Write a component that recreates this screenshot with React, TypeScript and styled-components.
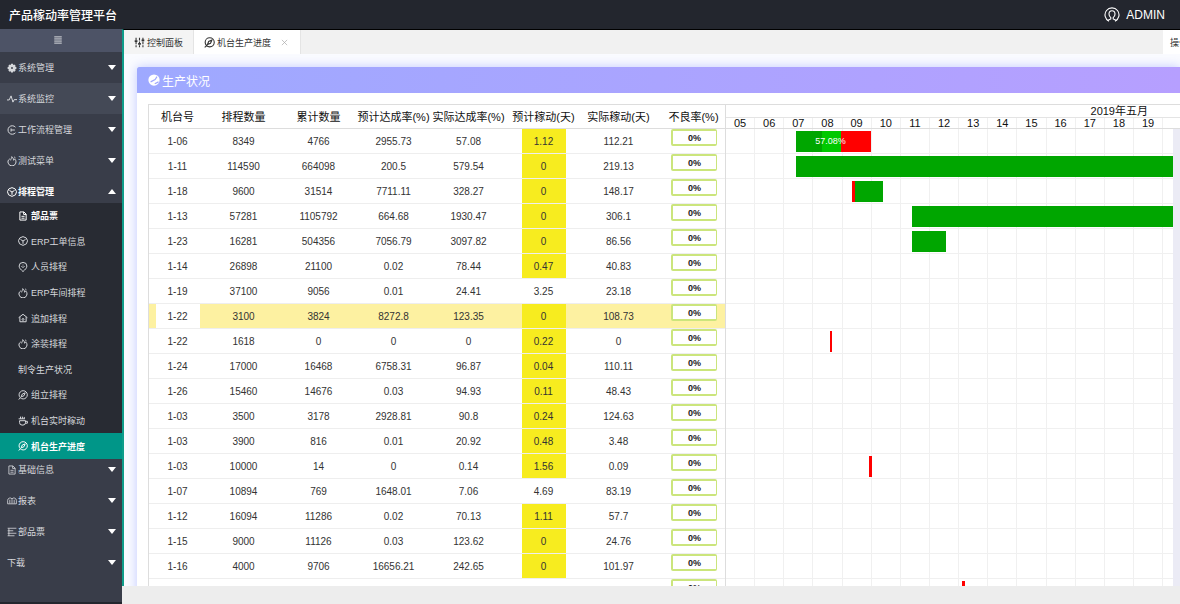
import React from "react";
import styled, { createGlobalStyle } from "styled-components";

const GlobalStyle = createGlobalStyle`
  * { box-sizing: border-box; }
  body {
    margin: 0;
    background: #ededed;
    font-family: "Liberation Sans", "Noto Sans CJK SC", sans-serif;
    font-size: 10px;
    color: #333;
  }
  button { font: inherit; color: inherit; background: none; border: 0; padding: 0; cursor: pointer; }
  a { color: inherit; text-decoration: none; }
`;

/* ---------- icons ---------- */

type IconName =
  | "gear" | "pulse" | "flow" | "flame" | "cube" | "file" | "pin" | "home"
  | "compass" | "cup" | "book" | "list" | "menu" | "sliders" | "user" | "gauge" | "close";

const shapes: Record<IconName, React.ReactNode> = {
  gear: (
    <>
      <path
        fill="currentColor"
        stroke="none"
        fillRule="evenodd"
        d="M6.500 1h3l.5 2 1.800-.8 2 2-.8 1.800 2 .5v3l-2 .5.8 1.800-2 2-1.800-.8-.5 2h-3l-.5-2-1.800.8-2-2 .8-1.800-2-.5v-3l2-.5-.8-1.800 2-2 1.800.8zM8 6.500a1.500 1.500 0 1 0 0 3 1.500 1.500 0 0 0 0-3z"
      />
    </>
  ),
  pulse: <path d="M0 9.500h3.500L6.500 3l3 10 2-4H16" />,
  flow: <path d="M13.500 3.500A6.800 6.800 0 1 0 13.500 12.500M6.500 5.500v5M6.500 8h6" />,
  flame: <path d="M4.500 4.500C1.500 6.500 1 9 2 11.500a6.300 6.300 0 0 0 12 0c1-3 0-5.500-2-7-.2 1.500-.8 2-1.500 2.200C10.300 4.500 9.500 2.500 7.500 1 7.800 3.500 6 4.500 5.800 7M11.500 1.500l2 1.500" />,
  cube: (
    <>
      <path d="M8 1l5 2 2.300 4.500L13.500 12.500 8 15l-5.500-2.500L.7 7.500 3 3z" />
      <path d="M4 5.500L8 8l4-2.500M8 8v4.500" />
    </>
  ),
  file: <path d="M3 1.500h6.500L13 5v9.500H3zM9 1.500V5.500h4M5.500 8.500h5M5.500 11.500h5" />,
  pin: (
    <>
      <path d="M8 15.300C4.500 12 1.800 9.800 1.800 6.500a6.200 5.800 0 0 1 12.400 0C14.200 9.800 11.500 12 8 15.300z" />
      <path d="M5.500 6.500L8 9l2.500-2.500M8 4.200v1.300" />
    </>
  ),
  home: <path d="M1 7.500L8 2l7 5.500M3 6.500V14h10V6.500M6 10.500l2-2 2 2M8 9v4" />,
  compass: (
    <>
      <circle cx="8.300" cy="7.700" r="6.600" />
      <path d="M11.500 4.500L6.800 6.500 5 11l4.500-1.800z" />
      <path d="M1 15l3-2.500" />
    </>
  ),
  cup: <path d="M2.500 7.500h9.500v3A4 4 0 0 1 8 14.500H6.500a4 4 0 0 1-4-4zM12 8.500h3v3h-3.500M4 1v3.500M7 1v3.500M10 1.500v3M1 4.500h10" />,
  book: <path d="M1 12.500V7A4 4 0 0 1 8 4.500 4 4 0 0 1 15 7v5.500H1zM8 5v7M4.500 6v6M11.500 6v6" />,
  list: <path d="M1 2h14M1 6h9M1 10h14M1 14h11M3 2v12" />,
  menu: <path d="M2 3h12M2 6.300h12M2 9.700h12M2 13h12" />,
  sliders: (
    <>
      <path d="M3 1v14M8 1v14M13 1v14" strokeDasharray="4 1.500" />
      <path d="M1 6h4M6 10h4M11 5h4" strokeWidth="2.500" />
    </>
  ),
  user: (
    <>
      <path d="M5 14.200A7 7 0 1 1 11 14.200" />
      <path d="M3.500 13.600L6.800 12V10.600A4 4.200 0 0 1 5 7a3 3.300 0 0 1 6 0 4 4.200 0 0 1-1.800 3.600V12l3.300 1.600" />
    </>
  ),
  gauge: (
    <>
      <circle cx="8" cy="8" r="7.500" fill="currentColor" stroke="none" />
      <path d="M3.500 10.500L9.500 7.500 12 3.500M9 13l5-2.500" stroke="#9fa6fd" strokeWidth="1.500" />
    </>
  ),
  close: <path d="M2 2l12 12M14 2L2 14" />,
};

const IconSvg = styled.svg`
  flex: none;
  display: block;
  fill: none;
  stroke: currentColor;
`;

function Icon({ name, size = 10, weight = 1.6 }: { name: IconName; size?: number; weight?: number }) {
  return (
    <IconSvg viewBox="0 0 16 16" width={size} height={size} strokeWidth={weight} aria-hidden="true">
      {shapes[name]}
    </IconSvg>
  );
}

/* ---------- frame ---------- */

const Page = styled.div`
  height: 100vh;
  display: flex;
  flex-direction: column;
  overflow: hidden;
`;

const TopBar = styled.header`
  flex: none;
  height: 29px;
  padding: 0 15px 0 9px;
  display: flex;
  align-items: center;
  justify-content: space-between;
  background: #23262e;
  color: #fff;
  font-size: 12px;
`;

const Brand = styled.h1`
  margin: 0;
  font-size: 12px;
  font-weight: 500;
`;

const UserButton = styled.button`
  display: flex;
  align-items: center;
  gap: 6px;
`;

const Body = styled.div`
  flex: 1;
  min-height: 0;
  display: flex;
`;

/* ---------- sidebar ---------- */

const Sidebar = styled.nav`
  flex: none;
  width: 122px;
  background: #393d49;
  border-bottom: 2px solid #23262e;
  color: #d6d8dc;
  font-size: 9px;
`;

const Collapse = styled.button`
  width: 100%;
  height: 23px;
  display: flex;
  align-items: center;
  justify-content: center;
  padding: 0 6px 2px 0;
  background: #4d5366;
`;

const MenuItem = styled.button<{ $hover?: boolean; $open?: boolean }>`
  width: 100%;
  height: 31px;
  padding: 0 6px 0 7px;
  display: flex;
  align-items: center;
  gap: 1px;
  background: ${(p) => (p.$hover ? "#444956" : "transparent")};
  color: ${(p) => (p.$open ? "#fff" : "inherit")};
  font-weight: ${(p) => (p.$open ? 700 : 400)};
`;

const Caret = styled.span<{ $up?: boolean }>`
  margin-left: auto;
  border: 4px solid transparent;
  border-top: ${(p) => (p.$up ? "0" : "5px solid #fff")};
  border-bottom: ${(p) => (p.$up ? "5px solid #fff" : "0")};
`;

const SubMenu = styled.ul`
  position: relative;
  margin: -4px 0 -5px;
  padding: 0;
  height: 256px;
  list-style: none;
  display: grid;
  grid-auto-rows: 1fr;
  background: #282b33;
`;

const SubLink = styled.a<{ $active?: boolean; $strong?: boolean }>`
  height: 100%;
  padding-left: 18px;
  display: flex;
  align-items: center;
  gap: 3px;
  background: ${(p) => (p.$active ? "#009688" : "transparent")};
  color: ${(p) => (p.$active || p.$strong ? "#fff" : "inherit")};
  font-weight: ${(p) => (p.$active || p.$strong ? 700 : 400)};
`;

/* ---------- main area ---------- */

const Main = styled.main`
  flex: 1;
  min-width: 0;
  display: flex;
  flex-direction: column;
`;

const Workspace = styled.div`
  flex: 1;
  min-height: 0;
  display: flex;
  flex-direction: column;
  border-top: 1px solid #000;
  border-left: 2px solid #0f9d8a;
`;

const TabBar = styled.div`
  flex: none;
  height: 24px;
  display: flex;
  background: #f1f1f1;
  color: #333;
  font-size: 9px;
`;

const Tab = styled.button<{ $active?: boolean }>`
  padding: 0 ${(p) => (p.$active ? "12px" : "10px")} 0 10px;
  display: flex;
  align-items: center;
  gap: 2px;
  border-right: 1px solid #e4e4e4;
  background: ${(p) => (p.$active ? "#fff" : "#f4f4f4")};
`;

const TabClose = styled.span`
  margin-left: 8px;
  color: #aaa;
`;

const TabActions = styled.button`
  width: 17px;
  margin-left: auto;
  padding-left: 7px;
  overflow: hidden;
  white-space: nowrap;
  text-align: left;
  background: #fff;
`;

const Content = styled.div`
  flex: 1;
  min-height: 0;
  padding: 13px 0 0 13px;
  background: #fafbff;
  overflow: hidden;
`;

const Card = styled.section`
  background: #fff;
  box-shadow: 0 0 10px rgba(110, 130, 255, 0.4);
`;

const CardTitle = styled.h2`
  margin: 0;
  height: 26px;
  padding-left: 11px;
  display: flex;
  align-items: center;
  gap: 2px;
  border-radius: 2px 0 0 0;
  background: linear-gradient(90deg, #9ea9ff, #b69fff);
  color: #fff;
  font-size: 12px;
  font-weight: 400;
`;

const CardBody = styled.div`
  padding: 11px 0 0 11px;
`;

const Board = styled.div`
  display: flex;
  border-top: 1px solid #ddd;
  border-left: 1px solid #ddd;
`;

const Footer = styled.footer`
  flex: none;
  height: 18px;
  background: #ededed;
`;

/* ---------- table ---------- */

const DataTable = styled.table`
  flex: none;
  width: 577px;
  table-layout: fixed;
  border-collapse: separate;
  border-spacing: 0;
  border-right: 1px solid #ddd;
  text-align: center;
`;

const HeadCell = styled.th`
  height: 24px;
  padding: 0;
  border-bottom: 1px solid #ddd;
  color: #111;
  font-size: 11px;
  line-height: 16px;
  font-weight: 400;
  white-space: nowrap;

  &:last-child {
    padding-left: 6px;
  }
`;

const DataRow = styled.tr<{ $selected?: boolean }>`
  background: ${(p) => (p.$selected ? "#fdf1a1" : "#fff")};
`;

const Cell = styled.td`
  height: 25px;
  padding: 0;
  border-bottom: 1px solid #eee;
  vertical-align: top;
`;

const Fill = styled.span<{ $tone?: "yellow" | "white" }>`
  display: block;
  width: 44px;
  height: 24px;
  margin: 0 auto;
  padding-top: 2px;
  line-height: 22px;
  background: ${(p) => (p.$tone === "yellow" ? "#f7ec1f" : p.$tone === "white" ? "#fff" : "transparent")};
`;

const Badge = styled.span`
  display: block;
  width: 46px;
  height: 17px;
  margin-left: 15px;
  border: 2px solid #cbe57c;
  border-right-width: 1px;
  border-radius: 2px;
  background: #fff;
  color: #222;
  font-size: 9px;
  font-weight: 700;
  line-height: 14px;
`;

/* ---------- gantt ---------- */

const Gantt = styled.div`
  flex: 1;
  min-width: 0;
`;

const Month = styled.div`
  height: 13px;
  padding-right: 32px;
  border-bottom: 1px solid #e4e4e4;
  color: #111;
  font-size: 11px;
  line-height: 12px;
  text-align: right;
`;

const Days = styled.div`
  height: 11px;
  padding-right: 7px;
  display: flex;
  border-bottom: 1px solid #ddd;
  color: #111;
  font-size: 11px;
  line-height: 11px;
  text-align: center;
`;

const Day = styled.div`
  flex: 1;
  border-right: 1px solid #f0f0f0;
`;

const Rest = styled.div`
  flex: none;
  width: 10px;
`;

const Track = styled.div`
  border-right: 7px solid #ebebf5;
`;

const GanttRow = styled.div`
  height: 25px;
  display: grid;
  border-bottom: 1px solid #f0f0f0;
`;

const Lines = styled.div`
  grid-area: 1 / 1;
  display: flex;
`;

const Bars = styled.div`
  grid-area: 1 / 1;
  z-index: 1;
  display: flex;
  padding-top: 2px;
`;

const Bar = styled.div`
  height: 21px;
  display: grid;
`;

const SegmentRow = styled.div`
  grid-area: 1 / 1;
  display: flex;
`;

const Segment = styled.span`
  display: block;
`;

const BarLabel = styled.span`
  grid-area: 1 / 1;
  padding-right: 6px;
  color: #fff;
  font-size: 9px;
  line-height: 21px;
  text-align: center;
`;

/* ---------- data ---------- */

const topMenu: { icon: IconName; text: string; hover?: boolean; open?: boolean }[] = [
  { icon: "gear", text: "系统管理" },
  { icon: "pulse", text: "系统监控", hover: true },
  { icon: "flow", text: "工作流程管理" },
  { icon: "flame", text: "测试菜单" },
  { icon: "cube", text: "排程管理", open: true },
];

const subMenu: { icon?: IconName; text: string; strong?: boolean; active?: boolean }[] = [
  { icon: "file", text: "部品票", strong: true },
  { icon: "cube", text: "ERP工单信息" },
  { icon: "pin", text: "人员排程" },
  { icon: "flame", text: "ERP车间排程" },
  { icon: "home", text: "追加排程" },
  { icon: "flame", text: "涂装排程" },
  { text: "制令生产状况" },
  { icon: "compass", text: "组立排程" },
  { icon: "cup", text: "机台实时稼动" },
  { icon: "compass", text: "机台生产进度", active: true },
];

const bottomMenu: { icon?: IconName; text: string }[] = [
  { icon: "file", text: "基础信息" },
  { icon: "book", text: "报表" },
  { icon: "list", text: "部品票" },
  { text: "下载" },
];

const columns = ["机台号", "排程数量", "累计数量", "预计达成率(%)", "实际达成率(%)", "预计稼动(天)", "实际稼动(天)", "不良率(%)"];

const rows: string[][] = [
  ["1-06", "8349", "4766", "2955.73", "57.08", "1.12", "112.21"],
  ["1-11", "114590", "664098", "200.5", "579.54", "0", "219.13"],
  ["1-18", "9600", "31514", "7711.11", "328.27", "0", "148.17"],
  ["1-13", "57281", "1105792", "664.68", "1930.47", "0", "306.1"],
  ["1-23", "16281", "504356", "7056.79", "3097.82", "0", "86.56"],
  ["1-14", "26898", "21100", "0.02", "78.44", "0.47", "40.83"],
  ["1-19", "37100", "9056", "0.01", "24.41", "3.25", "23.18"],
  ["1-22", "3100", "3824", "8272.8", "123.35", "0", "108.73"],
  ["1-22", "1618", "0", "0", "0", "0.22", "0"],
  ["1-24", "17000", "16468", "6758.31", "96.87", "0.04", "110.11"],
  ["1-26", "15460", "14676", "0.03", "94.93", "0.11", "48.43"],
  ["1-03", "3500", "3178", "2928.81", "90.8", "0.24", "124.63"],
  ["1-03", "3900", "816", "0.01", "20.92", "0.48", "3.48"],
  ["1-03", "10000", "14", "0", "0.14", "1.56", "0.09"],
  ["1-07", "10894", "769", "1648.01", "7.06", "4.69", "83.19"],
  ["1-12", "16094", "11286", "0.02", "70.13", "1.11", "57.7"],
  ["1-15", "9000", "11126", "0.03", "123.62", "0", "24.76"],
  ["1-16", "4000", "9706", "16656.21", "242.65", "0", "101.97"],
  ["", "", "", "", "", "", ""],
];
const selectedRow = 7;

const days = ["05", "06", "07", "08", "09", "10", "11", "12", "13", "14", "15", "16", "17", "18", "19"];

const GREEN = "#00a600";
const LIME = "#00c800";
const RED = "#ff0000";

/* start and part lengths are percentages of the visible period */
type BarData = { start: number; parts: [number, string][]; label?: string };
const bars: Record<number, BarData> = {
  0: { start: 15.6, parts: [[5.9, GREEN], [4.3, LIME], [6.7, RED]], label: "57.08%" },
  1: { start: 15.6, parts: [[84.4, GREEN]] },
  2: { start: 28.2, parts: [[0.7, RED], [6.2, GREEN]] },
  3: { start: 41.5, parts: [[58.5, GREEN]] },
  4: { start: 41.5, parts: [[7.7, GREEN]] },
  8: { start: 23.3, parts: [[0.5, RED]] },
  13: { start: 32.1, parts: [[0.5, RED]] },
  18: { start: 52.9, parts: [[0.5, RED]] },
};

function ProgressBar({ data }: { data: BarData }) {
  const total = data.parts.reduce((sum, [len]) => sum + len, 0);
  return (
    <Bar style={{ marginLeft: `${data.start}%`, width: `${total}%` }}>
      <SegmentRow>
        {data.parts.map(([len, color], i) => (
          <Segment key={i} style={{ width: `${(len / total) * 100}%`, background: color }} />
        ))}
      </SegmentRow>
      {data.label && <BarLabel>{data.label}</BarLabel>}
    </Bar>
  );
}

function fillTone(column: number, row: number, value: string) {
  if (column === 5 && value !== "" && Number(value) < 2) return "yellow" as const;
  if (column === 0 && row === selectedRow) return "white" as const;
  return undefined;
}

export default function App() {
  return (
    <Page>
      <GlobalStyle />
      <TopBar>
        <Brand>产品稼动率管理平台</Brand>
        <UserButton type="button">
          <Icon name="user" size={16} weight={1.1} />
          ADMIN
        </UserButton>
      </TopBar>
      <Body>
        <Sidebar>
          <Collapse type="button" aria-label="菜单">
            <Icon name="menu" />
          </Collapse>
          {topMenu.map((m) => (
            <MenuItem key={m.text} type="button" $hover={m.hover} $open={m.open}>
              <Icon name={m.icon} />
              {m.text}
              <Caret $up={m.open} />
            </MenuItem>
          ))}
          <SubMenu>
            {subMenu.map((m) => (
              <li key={m.text}>
                <SubLink href="#" $active={m.active} $strong={m.strong}>
                  {m.icon && <Icon name={m.icon} />}
                  {m.text}
                </SubLink>
              </li>
            ))}
          </SubMenu>
          {bottomMenu.map((m) => (
            <MenuItem key={m.text} type="button">
              {m.icon && <Icon name={m.icon} weight={1.3} />}
              {m.text}
              <Caret />
            </MenuItem>
          ))}
        </Sidebar>
        <Main>
          <Workspace>
            <TabBar>
              <Tab type="button">
                <Icon name="sliders" size={11} />
                控制面板
              </Tab>
              <Tab type="button" $active>
                <Icon name="compass" size={11} />
                机台生产进度
                <TabClose>
                  <Icon name="close" size={7} />
                </TabClose>
              </Tab>
              <TabActions type="button">操作</TabActions>
            </TabBar>
            <Content>
              <Card>
                <CardTitle>
                  <Icon name="gauge" size={12} />
                  生产状况
                </CardTitle>
                <CardBody>
                  <Board>
                    <DataTable>
                      <colgroup>
                        <col width="57" />
                        <col width="75" />
                        <col width="75" />
                        <col width="75" />
                        <col width="75" />
                        <col width="75" />
                        <col width="75" />
                        <col />
                      </colgroup>
                      <thead>
                        <tr>
                          {columns.map((c) => (
                            <HeadCell key={c}>{c}</HeadCell>
                          ))}
                        </tr>
                      </thead>
                      <tbody>
                        {rows.map((r, i) => (
                          <DataRow key={i} $selected={i === selectedRow}>
                            {r.map((value, c) => (
                              <Cell key={c}>
                                <Fill $tone={fillTone(c, i, value)}>{value}</Fill>
                              </Cell>
                            ))}
                            <Cell>
                              <Badge>0%</Badge>
                            </Cell>
                          </DataRow>
                        ))}
                      </tbody>
                    </DataTable>
                    <Gantt>
                      <Month>2019年五月</Month>
                      <Days>
                        {days.map((d) => (
                          <Day key={d}>{d}</Day>
                        ))}
                        <Rest />
                      </Days>
                      <Track>
                        {rows.map((_, i) => (
                          <GanttRow key={i}>
                            <Lines>
                              {days.map((d) => (
                                <Day key={d} />
                              ))}
                              <Rest />
                            </Lines>
                            {bars[i] && (
                              <Bars>
                                <ProgressBar data={bars[i]} />
                              </Bars>
                            )}
                          </GanttRow>
                        ))}
                      </Track>
                    </Gantt>
                  </Board>
                </CardBody>
              </Card>
            </Content>
          </Workspace>
          <Footer />
        </Main>
      </Body>
    </Page>
  );
}
